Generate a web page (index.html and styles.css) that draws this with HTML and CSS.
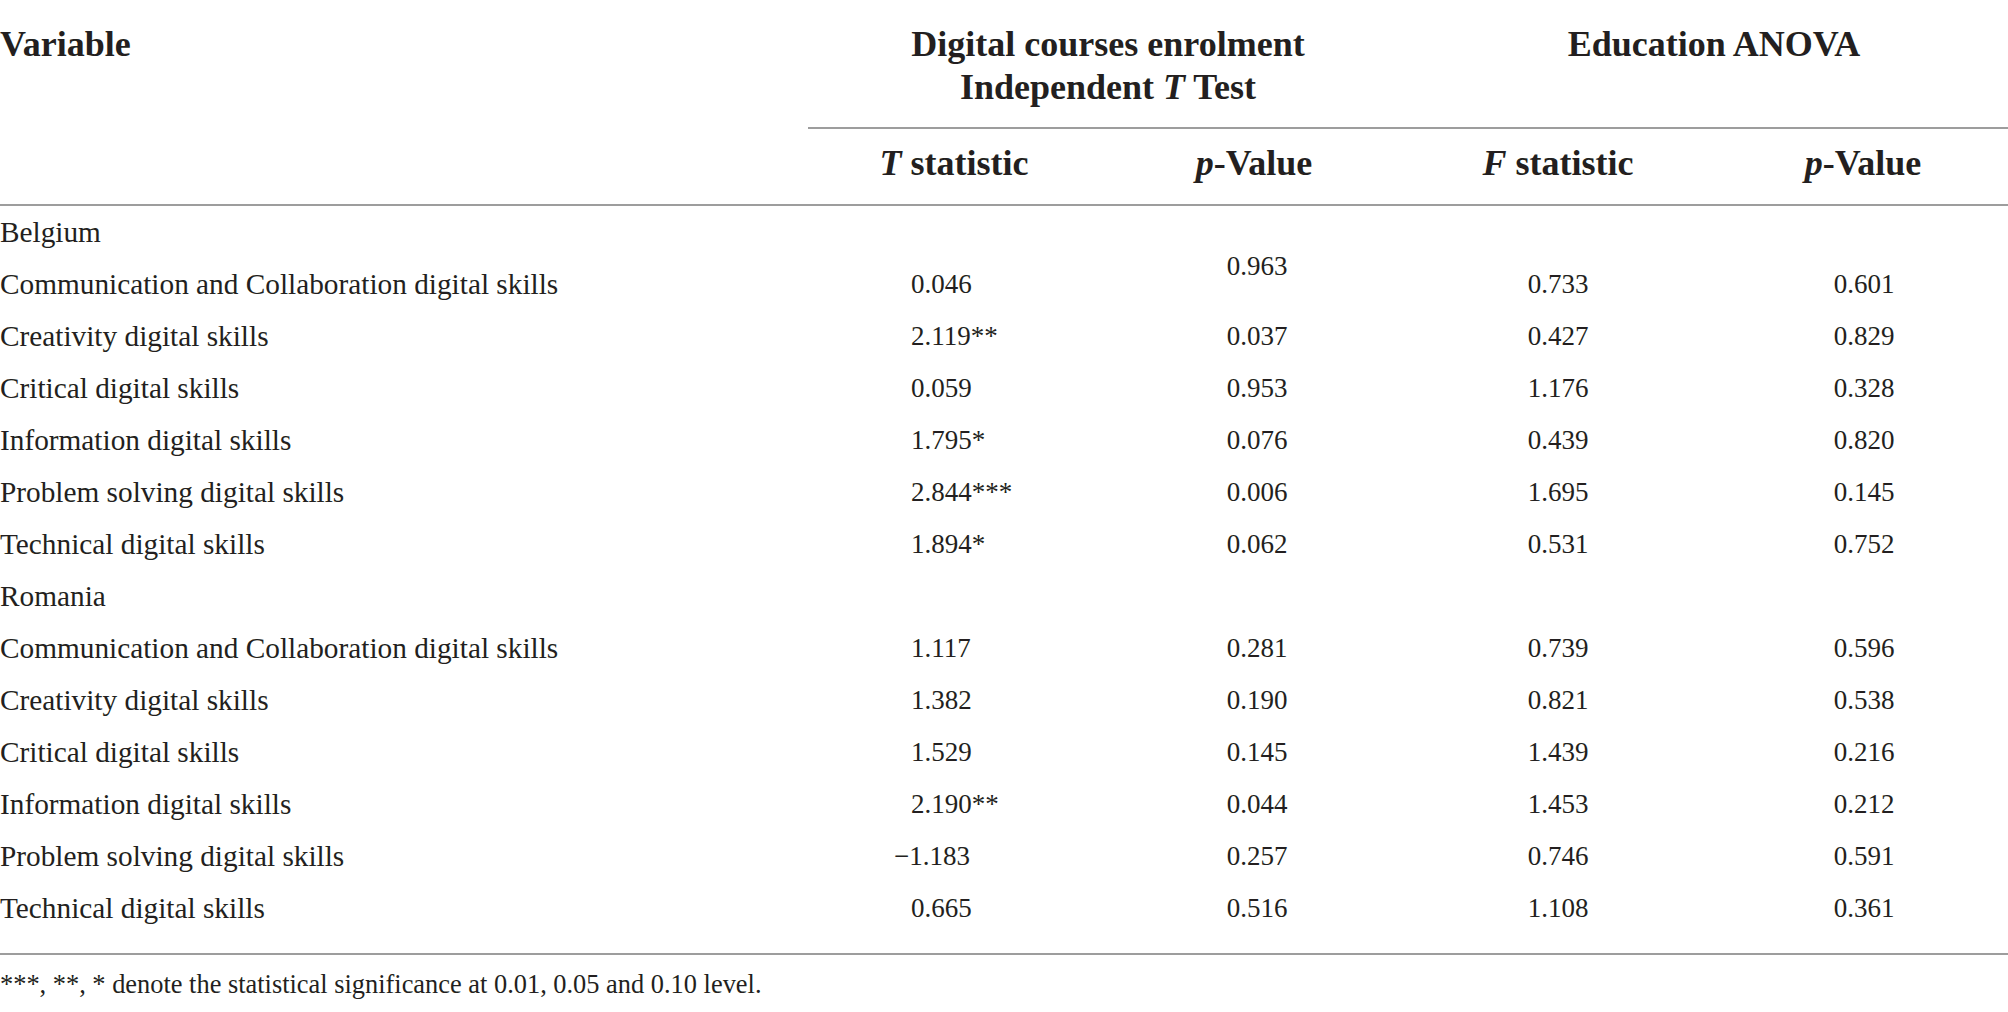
FILE: index.html
```html
<!DOCTYPE html>
<html lang="en">
<head>
    <meta charset="UTF-8">
    <meta name="viewport" content="width=device-width, initial-scale=1.0">
    <title>Digital skills by enrolment and education</title>
    <link rel="stylesheet" href="styles.css">
</head>
<body>
    <table class="stats">
        <colgroup>
            <col class="col-var">
            <col class="col-t">
            <col class="col-p1">
            <col class="col-f">
            <col class="col-p2">
        </colgroup>
        <thead>
            <tr>
                <th class="var-head" rowspan="2">Variable</th>
                <th class="group group-first" colspan="2">Digital courses enrolment<br>Independent <i>T</i> Test</th>
                <th class="group group-last" colspan="2">Education ANOVA</th>
            </tr>
            <tr class="sub">
                <th class="t-head"><i>T</i> statistic</th>
                <th class="p1-head"><i>p</i>-Value</th>
                <th><i>F</i> statistic</th>
                <th class="last"><i>p</i>-Value</th>
            </tr>
        </thead>
        <tbody>
            <tr>
                <td class="label">Belgium</td>
                <td></td><td></td><td></td><td></td>
            </tr>
            <tr>
                <td class="label">Communication and Collaboration digital skills</td>
                <td class="num t">0.046</td>
                <td class="num p1 raised">0.963</td>
                <td class="num">0.733</td>
                <td class="num last">0.601</td>
            </tr>
            <tr>
                <td class="label">Creativity digital skills</td>
                <td class="num t">2.119**</td>
                <td class="num p1">0.037</td>
                <td class="num">0.427</td>
                <td class="num last">0.829</td>
            </tr>
            <tr>
                <td class="label">Critical digital skills</td>
                <td class="num t">0.059</td>
                <td class="num p1">0.953</td>
                <td class="num">1.176</td>
                <td class="num last">0.328</td>
            </tr>
            <tr>
                <td class="label">Information digital skills</td>
                <td class="num t">1.795*</td>
                <td class="num p1">0.076</td>
                <td class="num">0.439</td>
                <td class="num last">0.820</td>
            </tr>
            <tr>
                <td class="label">Problem solving digital skills</td>
                <td class="num t">2.844***</td>
                <td class="num p1">0.006</td>
                <td class="num">1.695</td>
                <td class="num last">0.145</td>
            </tr>
            <tr>
                <td class="label">Technical digital skills</td>
                <td class="num t">1.894*</td>
                <td class="num p1">0.062</td>
                <td class="num">0.531</td>
                <td class="num last">0.752</td>
            </tr>
            <tr>
                <td class="label">Romania</td>
                <td></td><td></td><td></td><td></td>
            </tr>
            <tr>
                <td class="label">Communication and Collaboration digital skills</td>
                <td class="num t">1.117</td>
                <td class="num p1">0.281</td>
                <td class="num">0.739</td>
                <td class="num last">0.596</td>
            </tr>
            <tr>
                <td class="label">Creativity digital skills</td>
                <td class="num t">1.382</td>
                <td class="num p1">0.190</td>
                <td class="num">0.821</td>
                <td class="num last">0.538</td>
            </tr>
            <tr>
                <td class="label">Critical digital skills</td>
                <td class="num t">1.529</td>
                <td class="num p1">0.145</td>
                <td class="num">1.439</td>
                <td class="num last">0.216</td>
            </tr>
            <tr>
                <td class="label">Information digital skills</td>
                <td class="num t">2.190**</td>
                <td class="num p1">0.044</td>
                <td class="num">1.453</td>
                <td class="num last">0.212</td>
            </tr>
            <tr>
                <td class="label">Problem solving digital skills</td>
                <td class="num t neg">&minus;1.183</td>
                <td class="num p1">0.257</td>
                <td class="num">0.746</td>
                <td class="num last">0.591</td>
            </tr>
            <tr class="final">
                <td class="label">Technical digital skills</td>
                <td class="num t">0.665</td>
                <td class="num p1">0.516</td>
                <td class="num">1.108</td>
                <td class="num last">0.361</td>
            </tr>
        </tbody>
    </table>

    <p class="note">***, **, * denote the statistical significance at 0.01, 0.05 and 0.10 level.</p>
</body>
</html>
```

FILE: styles.css
```css
/* table page */
body {
    margin: 0;
    padding: 0;
    background: #fff;
    color: #231f20;
    font-family: "Liberation Serif", "Times New Roman", serif;
}

.stats {
    width: 2008px;
    table-layout: fixed;
    border-collapse: separate;
    border-spacing: 0;
}

.col-var { width: 808px; }
.col-t { width: 292px; }
.col-p1 { width: 308px; }
.col-f { width: 300px; }
.col-p2 { width: 300px; }

/* header */
th {
    font-size: 36px;
    font-weight: bold;
    line-height: 43px;
    text-align: center;
    padding: 0;
    white-space: nowrap;
}

.var-head {
    text-align: left;
    vertical-align: top;
    padding-top: 23px;
    border-bottom: 2px solid #9d9d9d;
}

.group {
    vertical-align: top;
    padding: 23px 0 18px;
    border-bottom: 2px solid #9d9d9d;
}

.group-last {
    padding-left: 12px;
}

.sub th {
    padding: 13px 0 19px;
    border-bottom: 2px solid #9d9d9d;
}

.sub th.last {
    padding-left: 10px;
}

/* body */
td {
    font-size: 29.3px;
    line-height: 52px;
    padding: 0;
    white-space: nowrap;
}

.label {
    text-align: left;
}

.num {
    font-size: 27px;
    text-align: center;
}

.num.t {
    text-align: left;
    padding-left: 103px;
}

.num.neg {
    text-indent: -17px;
}

.num.p1 {
    padding-left: 6px;
}

.num.last {
    padding-left: 12px;
}

/* the 0.963 sits higher than its row */
.raised {
    vertical-align: top;
    line-height: 16px;
}

.final td {
    padding-bottom: 19px;
    border-bottom: 2px solid #9d9d9d;
}

.note {
    font-size: 26.4px;
    line-height: 30px;
    margin: 14px 0 0;
}
```
